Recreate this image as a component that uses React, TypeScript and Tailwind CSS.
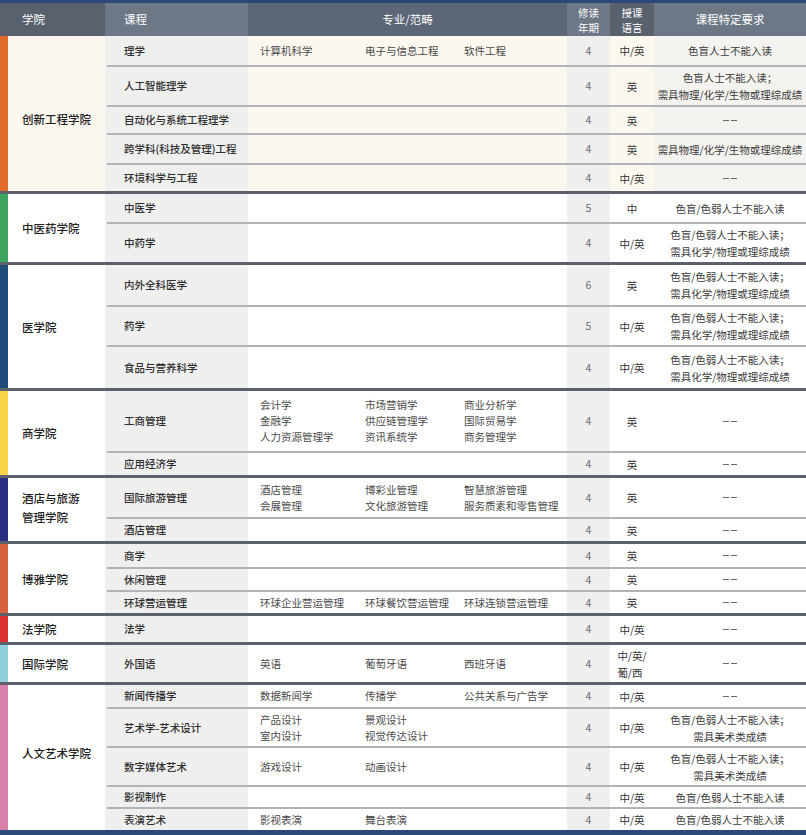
import React from "react";

type Row = {
  course: string;
  majors?: string[];
  years: string;
  lang: string[];
  req: string[];
  h: string;
};

type Group = {
  name: string[];
  bar: string;
  highlight?: boolean;
  nameCls?: string;
  rows: Row[];
};

const D = ["--"];
const CB = "色盲/色弱人士不能入读";

const groups: Group[] = [
  {
    name: ["创新工程学院"],
    bar: "bg-[#e06a2c]",
    highlight: true,
    nameCls: "pt-[11px] leading-[22px]",
    rows: [
      { course: "理学", majors: ["计算机科学", "电子与信息工程", "软件工程"], years: "4", lang: ["中/英"], req: ["色盲人士不能入读"], h: "h-[29px]" },
      { course: "人工智能理学", years: "4", lang: ["英"], req: ["色盲人士不能入读；", "需具物理/化学/生物或理综成绩"], h: "h-[38px]" },
      { course: "自动化与系统工程理学", years: "4", lang: ["英"], req: D, h: "h-[26px]" },
      { course: "跨学科(科技及管理)工程", years: "4", lang: ["英"], req: ["需具物理/化学/生物或理综成绩"], h: "h-[28px]" },
      { course: "环境科学与工程", years: "4", lang: ["中/英"], req: D, h: "h-[26px]" },
    ],
  },
  {
    name: ["中医药学院"],
    bar: "bg-[#3ea55e]",
    rows: [
      { course: "中医学", years: "5", lang: ["中"], req: [CB], h: "h-[28px]" },
      { course: "中药学", years: "4", lang: ["中/英"], req: ["色盲/色弱人士不能入读；", "需具化学/物理或理综成绩"], h: "h-[38px]" },
    ],
  },
  {
    name: ["医学院"],
    bar: "bg-[#1f4c78]",
    rows: [
      { course: "内外全科医学", years: "6", lang: ["英"], req: ["色盲/色弱人士不能入读；", "需具化学/物理或理综成绩"], h: "h-[40px]" },
      { course: "药学", years: "5", lang: ["中/英"], req: ["色盲/色弱人士不能入读；", "需具化学/物理或理综成绩"], h: "h-[38px]" },
      { course: "食品与营养科学", years: "4", lang: ["中/英"], req: ["色盲/色弱人士不能入读；", "需具化学/物理或理综成绩"], h: "h-[41px]" },
    ],
  },
  {
    name: ["商学院"],
    bar: "bg-[#f5d547]",
    rows: [
      {
        course: "工商管理",
        majors: ["会计学", "市场营销学", "商业分析学", "金融学", "供应链管理学", "国际贸易学", "人力资源管理学", "资讯系统学", "商务管理学"],
        years: "4",
        lang: ["英"],
        req: D,
        h: "h-[60px]",
      },
      { course: "应用经济学", years: "4", lang: ["英"], req: D, h: "h-[22px]" },
    ],
  },
  {
    name: ["酒店与旅游", "管理学院"],
    bar: "bg-[#2a2e80]",
    nameCls: "leading-[19px] pb-[3px]",
    rows: [
      {
        course: "国际旅游管理",
        majors: ["酒店管理", "博彩业管理", "智慧旅游管理", "会展管理", "文化旅游管理", "服务质素和零售管理"],
        years: "4",
        lang: ["英"],
        req: D,
        h: "h-[39px]",
      },
      { course: "酒店管理", years: "4", lang: ["英"], req: D, h: "h-[22px]" },
    ],
  },
  {
    name: ["博雅学院"],
    bar: "bg-[#d8623f]",
    rows: [
      { course: "商学", years: "4", lang: ["英"], req: D, h: "h-[23px]" },
      { course: "休闲管理", years: "4", lang: ["英"], req: D, h: "h-[21px]" },
      { course: "环球营运管理", majors: ["环球企业营运管理", "环球餐饮营运管理", "环球连锁营运管理"], years: "4", lang: ["英"], req: D, h: "h-[21px]" },
    ],
  },
  {
    name: ["法学院"],
    bar: "bg-[#dc2f30]",
    rows: [{ course: "法学", years: "4", lang: ["中/英"], req: D, h: "h-[26px]" }],
  },
  {
    name: ["国际学院"],
    bar: "bg-[#8fcfda]",
    rows: [
      { course: "外国语", majors: ["英语", "葡萄牙语", "西班牙语"], years: "4", lang: ["中/英/", "葡/西"], req: D, h: "h-[37px]" },
    ],
  },
  {
    name: ["人文艺术学院"],
    bar: "bg-[#d97fae]",
    nameCls: "pb-[9px] leading-[22px]",
    rows: [
      { course: "新闻传播学", majors: ["数据新闻学", "传播学", "公共关系与广告学"], years: "4", lang: ["中/英"], req: D, h: "h-[22px]" },
      { course: "艺术学-艺术设计", majors: ["产品设计", "景观设计", "", "室内设计", "视觉传达设计", ""], years: "4", lang: ["中/英"], req: ["色盲/色弱人士不能入读；", "需具美术类成绩"], h: "h-[37px]" },
      { course: "数字媒体艺术", majors: ["游戏设计", "动画设计"], years: "4", lang: ["中/英"], req: ["色盲/色弱人士不能入读；", "需具美术类成绩"], h: "h-[37px]" },
      { course: "影视制作", years: "4", lang: ["中/英"], req: [CB], h: "h-[20px]" },
      { course: "表演艺术", majors: ["影视表演", "舞台表演"], years: "4", lang: ["中/英"], req: [CB], h: "h-[21px]" },
    ],
  },
];

function RowView({ row, hl }: { row: Row; hl?: boolean }) {
  const white = hl ? "bg-[#fcf8f0]" : "bg-white";
  const grey = hl ? "bg-[#efefee]" : "bg-[#efefef]";
  const reqBg = hl ? "bg-[#f4f3f0]" : "bg-white";
  return (
    <div className={`flex ${row.h}`}>
      <div className={`w-[143px] ${grey} flex items-center pl-[19px] text-[10.5px] font-medium text-[#2e2e2e]`}>
        {row.course}
      </div>
      <div className={`w-[319px] ${white} flex items-center pl-[12px]`}>
        {row.majors && (
          <div className="grid grid-cols-[105px_99px_1fr] leading-[16px] text-[10.5px] text-[#4a4a4a]">
            {row.majors.map((m, i) => (
              <div key={i}>{m}</div>
            ))}
          </div>
        )}
      </div>
      <div className={`w-[43px] ${grey} flex items-center justify-center text-[10.5px] text-[#6b6b6b]`}>
        {row.years}
      </div>
      <div className={`w-[44px] ${white} flex items-center justify-center`}>
        <div className="text-left leading-[17px] text-[10.5px] text-[#333]">
          {row.lang.map((l, i) => (
            <div key={i}>{l}</div>
          ))}
        </div>
      </div>
      <div className={`w-[152px] ${reqBg} flex flex-col items-center justify-center leading-[17px] text-[10.5px] text-[#3a3a3a]`}>
        {row.req.map((r, i) =>
          r === "--" ? (
            <div key={i} className="flex gap-[2px]">
              <span className="w-[6px] h-[1px] bg-[#666]" />
              <span className="w-[6px] h-[1px] bg-[#666]" />
            </div>
          ) : (
            <div key={i}>{r}</div>
          )
        )}
      </div>
    </div>
  );
}

function GroupView({ g }: { g: Group }) {
  return (
    <div className="flex">
      <div className={`w-[105px] flex ${g.highlight ? "bg-[#fcf8f0]" : "bg-white"}`}>
        <div className={`w-[8px] ${g.bar}`} />
        <div className={`flex-1 flex flex-col justify-center pl-[14px] text-[11.5px] font-medium text-[#222] ${g.nameCls ?? "leading-[22px]"}`}>
          {g.name.map((n, i) => (
            <div key={i}>{n}</div>
          ))}
        </div>
      </div>
      <div className="w-[701px] flex flex-col">
        {g.rows.map((r, i) => (
          <React.Fragment key={i}>
            {i > 0 && (
              <div className={`h-[2px] flex ${g.highlight ? "bg-[#efefee]" : "bg-[#efefef]"}`}>
                <div className="w-[2px]" />
                <div className="flex-1 bg-[#b0b3b8]" />
              </div>
            )}
            <RowView row={r} hl={g.highlight} />
          </React.Fragment>
        ))}
      </div>
    </div>
  );
}

export default function App() {
  return (
    <div className="w-[806px] font-['Noto_Sans_CJK_SC',sans-serif] bg-white">
      <div className="h-[3px] bg-[#2c4878]" />
      <div className="flex h-[33px] text-white text-[11.5px]">
        <div className="w-[105px] bg-[#59616f] flex items-center pl-[22px]">学院</div>
        <div className="w-[143px] bg-[#6d7786] flex items-center pl-[19px]">课程</div>
        <div className="w-[319px] bg-[#5d6676] flex items-center justify-center">专业/范畴</div>
        <div className="w-[43px] bg-[#6d7786] flex flex-col items-center justify-center text-[10.5px] leading-[15px]">
          <div>修读</div>
          <div>年期</div>
        </div>
        <div className="w-[44px] bg-[#59616f] flex flex-col items-center justify-center text-[10.5px] leading-[15px]">
          <div>授课</div>
          <div>语言</div>
        </div>
        <div className="w-[152px] bg-[#6d7786] flex items-center justify-center">课程特定要求</div>
      </div>
      {groups.map((g, i) => (
        <React.Fragment key={i}>
          {i > 0 && <div className="h-[3px] bg-[#5c626d]" />}
          <GroupView g={g} />
        </React.Fragment>
      ))}
      <div className="h-[5px] bg-[#2c4878]" />
    </div>
  );
}
